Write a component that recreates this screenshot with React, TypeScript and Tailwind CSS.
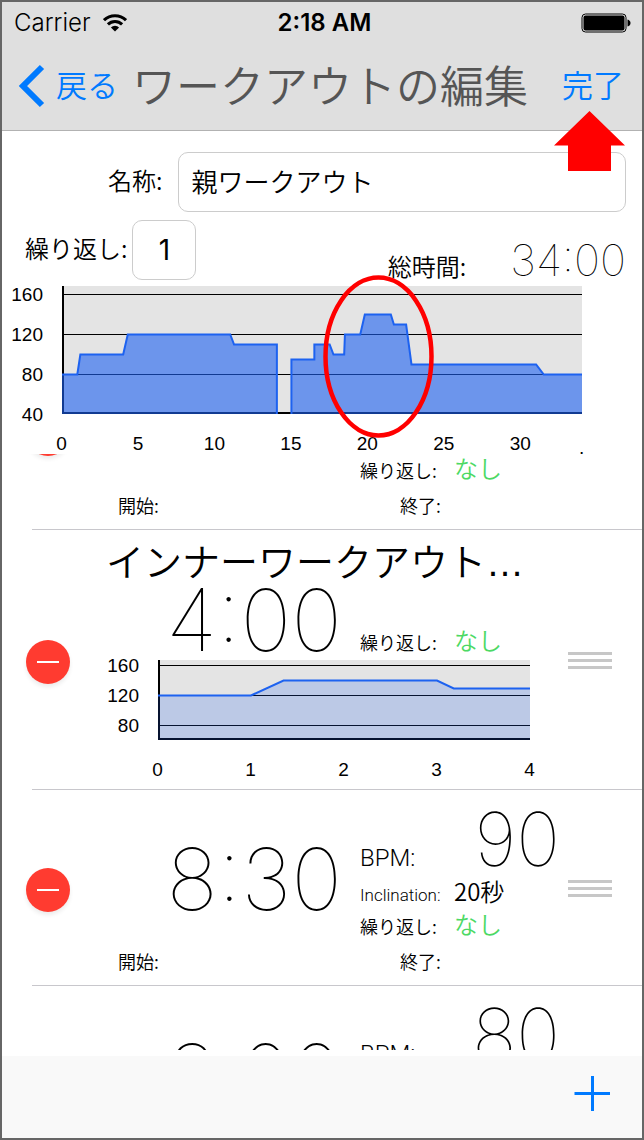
import type { ReactNode } from "react";

type Point = [number, number];

type ChartProps = {
    label: string;
    width: number;
    height: number;
    plot: { x: number; y: number; width: number; height: number };
    gridTop: number;
    bpmScale: number;
    duration: number;
    bpmTicks: number[];
    minuteTicks: number[];
    segments: Point[][];
    closed?: boolean;
    fillOpacity: number;
    labelY: number;
    children?: ReactNode;
};

// Points are [minute, bpm]; gridTop is the y of the 160 bpm line.
const Chart = ({
    label,
    width,
    height,
    plot,
    gridTop,
    bpmScale,
    duration,
    bpmTicks,
    minuteTicks,
    segments,
    closed,
    fillOpacity,
    labelY,
    children,
}: ChartProps) => {
    const toX = (minute: number) => plot.x + (minute / duration) * plot.width;
    const toY = (bpm: number) => gridTop + (160 - bpm) * bpmScale;
    const bottom = plot.y + plot.height;
    const right = plot.x + plot.width;

    return (
        <svg
            role="img"
            aria-label={label}
            viewBox={`0 0 ${width} ${height}`}
            className="block w-full overflow-visible font-['Liberation_Sans',Arial,sans-serif] text-[19px]"
        >
            <rect {...plot} fill="#e4e4e4" />
            {bpmTicks.map((bpm) => (
                <g key={bpm}>
                    {toY(bpm) < bottom - 2 && (
                        <path d={`M${plot.x} ${toY(bpm)}H${right}`} stroke="#000" />
                    )}
                    <text x={plot.x - 19} y={toY(bpm) + 6} textAnchor="end">
                        {bpm}
                    </text>
                </g>
            ))}
            <path
                d={`M${plot.x + 1} ${plot.y}V${bottom - 1}H${right}`}
                fill="none"
                stroke="#000"
                strokeWidth="2"
            />
            {segments.map((points) => {
                const line = points.map(([m, bpm]) => `${toX(m)} ${toY(bpm)}`).join("L");
                const first = toX(points[0][0]);
                const last = toX(points[points.length - 1][0]);
                const start = closed && first > plot.x ? `M${first} ${bottom}L` : "M";
                const end = closed && last < right ? `V${bottom}` : "";
                return (
                    <g key={points[0][0]}>
                        <path
                            d={`M${first} ${bottom}L${line}L${last} ${bottom}Z`}
                            fill="#1d61f1"
                            fillOpacity={fillOpacity}
                        />
                        <path d={`${start}${line}${end}`} fill="none" stroke="#1d62f0" strokeWidth="2" />
                    </g>
                );
            })}
            {minuteTicks.map((minute) => (
                <text key={minute} x={toX(minute) - 0.5} y={labelY} textAnchor="middle">
                    {minute}
                </text>
            ))}
            {children}
        </svg>
    );
};

const workoutSegments: Point[][] = [
    [
        [0, 80],
        [1, 80],
        [1.2, 100],
        [4, 100],
        [4.3, 120],
        [11, 120],
        [11.25, 110],
        [14.05, 110],
    ],
    [
        [15, 95],
        [16.5, 95],
        [16.5, 110],
        [17.5, 110],
        [17.75, 100],
        [18.45, 100],
        [18.5, 120],
        [19.5, 120],
        [19.8, 140],
        [21.5, 140],
        [21.7, 130],
        [22.5, 130],
        [22.85, 90],
        [31, 90],
        [31.5, 80],
        [34, 80],
    ],
];

const innerSegments: Point[][] = [
    [
        [0, 120],
        [1, 120],
        [1.35, 140],
        [3, 140],
        [3.18, 129.5],
        [4, 129.5],
    ],
];

const StatusBar = () => (
    <div className="grid h-10 grid-cols-3 items-center pt-0.5 pr-[11px] pl-3 font-[Inter,sans-serif] text-[24px]">
        <div className="flex items-center gap-3">
            <span>Carrier</span>
            <svg width="24" height="18" viewBox="0 0 24 18" fill="none" stroke="#000" strokeWidth="3">
                <path d="M1 6.2A15.6 15.6 0 0 1 23 6.2" />
                <path d="M4.9 10.4A10 10 0 0 1 19.1 10.4" />
                <path d="M12 17.6L7.9 13.4A5.8 5.8 0 0 1 16.1 13.4Z" fill="#000" stroke="none" />
            </svg>
        </div>
        <span className="pl-1 text-center font-semibold">2:18 AM</span>
        <svg className="ml-auto" width="50" height="20" viewBox="0 0 50 20">
            <rect x="1" y="1" width="44" height="18" rx="3.5" fill="none" stroke="#000" />
            <rect x="2.5" y="2.5" width="41" height="15" rx="2" />
            <path d="M46.5 6.5Q49.5 7.5 49.5 10T46.5 13.5Z" />
        </svg>
    </div>
);

const NavBar = () => (
    <div className="flex h-[88px] items-center pr-[18px] pl-4">
        <button className="flex items-center gap-2.5 text-[31px] text-[#007aff]">
            <svg width="28" height="44" viewBox="0 0 28 44" fill="none" stroke="currentColor" strokeWidth="6">
                <path d="M24 3L5 22L24 41" />
            </svg>
            <span className="pb-1">戻る</span>
        </button>
        <h1 className="flex-1 pb-1 pl-3.5 text-[44px] leading-[60px] text-[#555] whitespace-nowrap">
            ワークアウトの編集
        </h1>
        <button className="pb-1 text-[31px] text-[#007aff]">完了</button>
    </div>
);

const RemoveButton = () => (
    <button
        aria-label="削除"
        className="mt-1 flex size-11 shrink-0 items-center justify-center rounded-full bg-[#ff3b30] shadow-[0_3px_4px_rgba(0,0,0,0.08)]"
    >
        <span className="h-0.5 w-[22px] bg-white" />
    </button>
);

const DragHandle = () => (
    <button aria-label="並べ替え" className="mt-0.5 flex w-11 shrink-0 flex-col gap-1">
        <span className="h-[3px] bg-[#c7c7c7]" />
        <span className="h-[3px] bg-[#c7c7c7]" />
        <span className="h-[3px] bg-[#c7c7c7]" />
    </button>
);

const Row = ({ children, handle = true }: { children: ReactNode; handle?: boolean }) => (
    <li>
        <div className="flex items-center pr-[30px] pl-6">
            <RemoveButton />
            <div className="min-w-0 flex-1">{children}</div>
            {handle ? <DragHandle /> : <div className="w-11" />}
        </div>
        <div className="ml-[30px] h-px bg-[#c8c7cc]" />
    </li>
);

const Repeat = () => (
    <div className="flex items-center">
        <span className="w-[94px] text-[18px] leading-6">繰り返し:</span>
        <span className="pb-1 text-[24px] leading-5 text-[#4cd964]">なし</span>
    </div>
);

type Interval = {
    time?: string;
    bpm?: string;
    inclination?: string;
};

const IntervalRow = ({ time, bpm, inclination }: Interval) => (
    <Row handle={!!time}>
        <div className="grid grid-cols-[290fr_208fr] pt-3">
            <div className="flex items-center justify-end pt-3.5 pr-[18px] font-[Inter,sans-serif] text-[86px] leading-[84px] font-thin">
                {time}
            </div>
            <div className="pr-2">
                <div className="flex h-[74px] items-baseline justify-between">
                    {bpm && (
                        <>
                            <span className="font-[Roboto,sans-serif] text-[24px] font-light">BPM:</span>
                            <span className="font-[Inter,sans-serif] text-[74px] leading-[74px] font-thin">
                                {bpm}
                            </span>
                        </>
                    )}
                </div>
                <div className="flex h-[34px] items-center pb-1">
                    {inclination && (
                        <>
                            <span className="w-[94px] pt-2.5 font-[Roboto,sans-serif] text-[17px] font-light">
                                Inclination:
                            </span>
                            <span className="text-[24px] leading-7">{inclination}</span>
                        </>
                    )}
                </div>
                <div className="flex h-8 items-center">
                    <Repeat />
                </div>
            </div>
        </div>
        <div className="grid h-[43px] grid-cols-[290fr_208fr] items-center pb-1 text-[18px]">
            <span className="pl-12">開始:</span>
            <span className="pl-10">終了:</span>
        </div>
    </Row>
);

const InnerWorkoutRow = () => (
    <Row>
        <h2 className="pt-2 pb-1 pl-9 text-[38px] leading-[44px] whitespace-nowrap">
            インナーワークアウト
            <span className="font-['Liberation_Sans',Arial,sans-serif] leading-none">…</span>
        </h2>
        <div className="grid grid-cols-[290fr_208fr] items-end">
            <div className="pr-[18px] text-right font-[Inter,sans-serif] text-[86px] leading-[68px] font-thin">
                4:00
            </div>
            <Repeat />
        </div>
        <Chart
            label="インナーワークアウト"
            width={498}
            height={135}
            plot={{ x: 88, y: 6, width: 372, height: 80 }}
            gridTop={11.5}
            bpmScale={0.75}
            duration={4}
            bpmTicks={[160, 120, 80]}
            minuteTicks={[0, 1, 2, 3, 4]}
            segments={innerSegments}
            fillOpacity={0.2}
            labelY={122}
        />
    </Row>
);

const App = () => {
    return (
        <div className="flex h-screen flex-col overflow-hidden border-2 border-[#666] bg-white font-['Noto_Sans_CJK_JP',sans-serif] font-[350] text-black">
            <header className="relative border-b border-[#b2b2b2] bg-[#dfdfdf]">
                <StatusBar />
                <NavBar />
                <svg
                    className="absolute top-[109px] right-[17px]"
                    width="71"
                    height="60"
                    viewBox="0 0 71 60"
                    fill="#f00"
                >
                    <path d="M35.5 0L71 34.5H57V60H14V34.5H0Z" />
                </svg>
            </header>

            <section className="pt-[21px]">
                <div className="flex items-center gap-4 pr-4 pl-[106px]">
                    <label htmlFor="name" className="pb-1 text-[24px]">
                        名称:
                    </label>
                    <input
                        id="name"
                        defaultValue="親ワークアウト"
                        className="h-[60px] min-w-0 flex-1 rounded-[10px] border border-[#ccc] px-3 pb-1 text-[26px]"
                    />
                </div>
                <div className="mt-2 flex items-center gap-[5px] pr-4 pl-[23px]">
                    <label htmlFor="repeat" className="pb-1 text-[24px]">
                        繰り返し:
                    </label>
                    <input
                        id="repeat"
                        defaultValue="1"
                        className="h-[60px] w-16 rounded-[10px] border border-[#ccc] text-center font-[Inter,sans-serif] text-[28px] font-normal"
                    />
                    <div className="ml-auto flex items-baseline gap-11 self-end">
                        <span className="text-[24px] leading-7">総時間:</span>
                        <span className="font-[Inter,sans-serif] text-[44px] leading-10 font-thin">34:00</span>
                    </div>
                </div>
                <Chart
                    label="ワークアウト"
                    width={640}
                    height={174}
                    plot={{ x: 60, y: 6, width: 520, height: 128 }}
                    gridTop={14.5}
                    bpmScale={1}
                    duration={34}
                    bpmTicks={[160, 120, 80, 40]}
                    minuteTicks={[0, 5, 10, 15, 20, 25, 30]}
                    segments={workoutSegments}
                    closed
                    fillOpacity={0.6}
                    labelY={170}
                >
                    <text x="577" y="174">
                        .
                    </text>
                    <ellipse cx="376.5" cy="76.5" rx="53" ry="79" fill="none" stroke="#f00" strokeWidth="4.5" />
                </Chart>
            </section>

            {/* the list is scrolled part way into its first row */}
            <div className="mb-1.5 min-h-0 flex-1 overflow-hidden">
                <ul className="-mt-[120px]">
                    <IntervalRow />
                    <InnerWorkoutRow />
                    <IntervalRow time="8:30" bpm="90" inclination="20秒" />
                    <IntervalRow time="3:00" bpm="80" />
                </ul>
            </div>

            <footer className="flex h-[82px] shrink-0 items-center justify-end bg-[#f9f9f9] pr-8">
                <button aria-label="追加" className="text-[#007aff]">
                    <svg width="36" height="44" viewBox="0 0 36 44" fill="none" stroke="currentColor" strokeWidth="3">
                        <path d="M0.5 18.5H36M18.5 1V36" />
                    </svg>
                </button>
            </footer>
        </div>
    );
};

export default App;
